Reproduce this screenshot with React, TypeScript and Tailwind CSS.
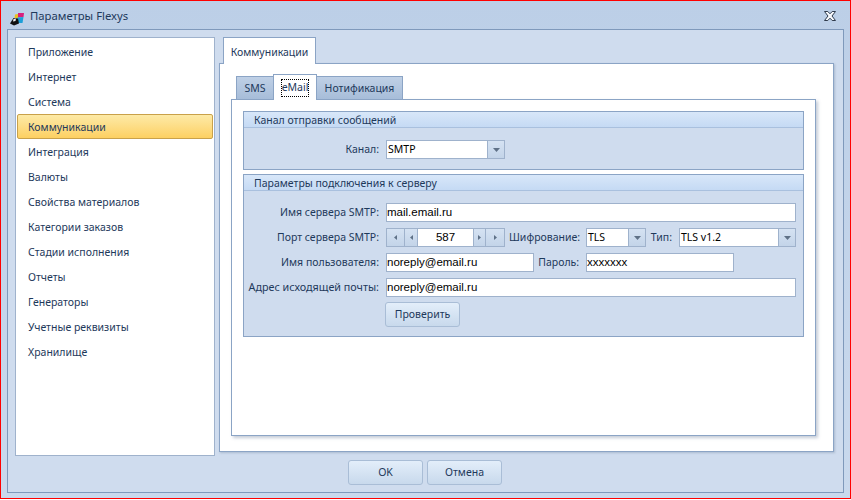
const font = 'font-["Noto_Sans",sans-serif]';
const fieldFont = 'font-["Liberation_Sans",sans-serif] text-[11.5px] text-black leading-none';

const menuItems = [
  'Приложение',
  'Интернет',
  'Система',
  'Коммуникации',
  'Интеграция',
  'Валюты',
  'Свойства материалов',
  'Категории заказов',
  'Стадии исполнения',
  'Отчеты',
  'Генераторы',
  'Учетные реквизиты',
  'Хранилище',
];

function Arrow({ dir }: { dir: 'left' | 'right' | 'down' }) {
  const points = dir === 'down' ? '0,0 7,0 3.5,4' : dir === 'left' ? '3,0 3,5 0,2.5' : '0,0 0,5 3,2.5';
  return (
    <svg width={dir === 'down' ? 7 : 3} height={dir === 'down' ? 4 : 5} className="shrink-0">
      <polygon points={points} fill="#5f7187" />
    </svg>
  );
}

function Logo() {
  return (
    <svg width="15" height="13" viewBox="0 0 15 13" className="shrink-0 mt-[8px]">
      <polygon points="5,1.5 8,1 8,5 4.5,5" fill="#e8c020" />
      <polygon points="8,0 14,0 13.5,4 8,4.5" fill="#d81f7c" />
      <polygon points="7.5,4.5 13.5,4 12.5,10 8,10" fill="#1c9fd8" />
      <polygon points="0,10.5 3.5,5 8,5.5 9,10.5 4,12.5" fill="#111" />
      <polygon points="3.5,6 6,5.5 5.5,8 3,8.5" fill="#f2f2f2" />
    </svg>
  );
}

function CloseIcon() {
  return (
    <svg width="12" height="10" viewBox="0 0 12 10">
      <path d="M.5 .5 H3.8 L6 2.8 L8.2 .5 H11.5 L8 5 L11.5 9.5 H8.2 L6 7.2 L3.8 9.5 H.5 L4 5 Z" fill="#f7f9fc" stroke="#2f3b4c" strokeWidth="1" />
    </svg>
  );
}

function Field({ width, value }: { width: string; value: string }) {
  return (
    <div className={`${width} h-[19px] shrink-0 bg-white border border-[#9fb2cc] flex items-center ${fieldFont}`}>
      {value}
    </div>
  );
}

function Combo({ width, value }: { width: string; value: string }) {
  return (
    <div className={`${width} h-[19px] shrink-0 bg-white border border-[#9fb2cc] flex items-center text-[10.5px] text-black leading-none`}>
      <span className="flex-1 pl-[1px]">{value}</span>
      <span className="w-[17px] h-full bg-gradient-to-b from-[#d5e2f2] to-[#c3d4e9] border-l border-[#9fb2cc] flex items-center justify-center">
        <Arrow dir="down" />
      </span>
    </div>
  );
}

function Spinner() {
  const btn = 'h-full bg-gradient-to-b from-[#d5e2f2] to-[#c3d4e9] border-[#9fb2cc] flex items-center justify-center';
  return (
    <div className={`w-[119px] h-[19px] shrink-0 bg-white border border-[#9fb2cc] flex items-center ${fieldFont}`}>
      <span className={`w-[18px] border-r ${btn}`}>
        <Arrow dir="left" />
      </span>
      <span className={`w-[13px] border-r ${btn}`}>
        <Arrow dir="left" />
      </span>
      <span className="flex-1 text-center">587</span>
      <span className={`w-[13px] border-x ${btn}`}>
        <Arrow dir="right" />
      </span>
      <span className={`w-[18px] ${btn}`}>
        <Arrow dir="right" />
      </span>
    </div>
  );
}

function Group({ title, className, children }: { title: string; className: string; children: React.ReactNode }) {
  return (
    <div className={`border border-[#8ba4c5] bg-[#cfdcee] ${className}`}>
      <div className="h-[16px] pl-[10px] pt-[1px] flex items-center bg-gradient-to-b from-[#d8e7f9] to-[#c5daf4] border-b border-[#a9c0de] text-[10.5px] text-[#1e395b] leading-none">
        {title}
      </div>
      {children}
    </div>
  );
}

function Label({ children, className = '' }: { children: React.ReactNode; className?: string }) {
  return <span className={`text-[#1e395b] leading-none text-right shrink-0 ${className}`}>{children}</span>;
}

function Row({ label, labelSize = 'text-[10.5px]', children }: { label: string; labelSize?: string; children: React.ReactNode }) {
  return (
    <div className="flex items-center">
      <Label className={`w-[135px] ${labelSize}`}>{label}</Label>
      <div className="ml-[7px] flex items-center">{children}</div>
    </div>
  );
}

function FlatButton({ children }: { children: React.ReactNode }) {
  return (
    <div className="w-[75px] h-[25px] rounded-[3px] border border-[#a9bdd6] bg-gradient-to-b from-[#e3eefa] to-[#c8d9ec] flex items-center justify-center text-[10.5px] text-[#1e395b] leading-none">
      {children}
    </div>
  );
}

export default function App() {
  return (
    <div className={`w-[851px] h-[499px] border border-[#ff0000] bg-gradient-to-b from-[#bccfe7] to-[#c9d9ed] flex flex-col ${font}`}>
      {/* Title bar */}
      <div className="h-[28px] shrink-0 pl-[9px] pr-[14px] flex items-center">
        <Logo />
        <span className="ml-[5px] mt-[2px] text-[11.3px] text-[#1e395b] leading-none">Параметры Flexys</span>
        <span className="ml-auto flex mt-[1px]">
          <CloseIcon />
        </span>
      </div>

      {/* Window body */}
      <div className="mx-[6px] h-[464px] border border-[#7f99bb] bg-[#cfdcee] pt-[7px] pl-[7px] pr-[8px] flex flex-col">
        <div className="flex h-[419px]">
          <div className="w-[200px] shrink-0 bg-white border border-[#9fb2cc] p-[1px]">
            {menuItems.map((item) =>
              item === 'Коммуникации' ? (
                <div key={item} className="h-[25px] pl-[10px] pt-[1px] flex items-center rounded-[2px] border border-[#c9a14a] bg-gradient-to-b from-[#fdeaa6] to-[#fdd061] text-[10.5px] text-[#1e395b] leading-none">
                  {item}
                </div>
              ) : (
                <div key={item} className="h-[25px] pl-[11px] pt-[2px] flex items-center text-[10.5px] text-[#1e395b] leading-none">
                  {item}
                </div>
              ),
            )}
          </div>

          <div className="ml-[4px] w-[615px] flex flex-col">
            <div className="h-[26px] pl-[4px] flex shrink-0">
              <div className="relative z-10 w-[93px] h-[27px] pt-[2px] bg-white border border-b-0 border-[#8ba4c5] flex items-center justify-center text-[10.5px] text-[#1e395b] leading-none">
                Коммуникации
              </div>
            </div>
            <div className="h-[389px] shrink-0 bg-white border border-[#8ba4c5] shadow-[1px_1px_2px_rgba(90,110,140,0.3)] pt-[10px] pl-[11px]">
              <div className="h-[25px] pl-[5px] flex items-end">
                <div className="w-[38px] h-[23px] bg-gradient-to-b from-[#bfd0e6] to-[#a7bdd9] border border-b-0 border-[#8ba4c5] flex items-center justify-center text-[10.5px] text-[#1e395b] leading-none">
                  SMS
                </div>
                <div className="relative z-10 w-[44px] h-[26px] -mb-px -ml-px bg-white border border-b-0 border-[#8ba4c5] flex items-center justify-center text-[10.5px] text-[#1e395b] leading-none">
                  <span className="w-[28px] h-[18px] border border-dotted border-black flex items-center justify-center leading-none">eMail</span>
                </div>
                <div className="w-[87px] h-[23px] -ml-px bg-gradient-to-b from-[#bfd0e6] to-[#a7bdd9] border border-b-0 border-[#8ba4c5] flex items-center justify-center text-[10.5px] text-[#1e395b] leading-none">
                  Нотификация
                </div>
              </div>

              <div className="w-[585px] h-[337px] bg-white border border-[#8ba4c5] shadow-[2px_2px_3px_rgba(90,110,140,0.35)] pt-[11px] pl-[11px]">
                <Group title="Канал отправки сообщений" className="w-[561px] h-[59px]">
                  <div className="mt-[12px] flex items-center">
                    <Label className="w-[135px] text-[10.5px]">Канал:</Label>
                    <div className="ml-[7px]">
                      <Combo width="w-[119px]" value="SMTP" />
                    </div>
                  </div>
                </Group>

                <Group title="Параметры подключения к серверу" className="mt-[4px] w-[561px] h-[163px]">
                  <div className="pt-[12px] flex flex-col gap-[6px]">
                    <Row label="Имя сервера SMTP:">
                      <Field width="w-[410px]" value="mail.email.ru" />
                    </Row>
                    <Row label="Порт сервера SMTP:">
                      <Spinner />
                      <Label className="ml-[4px] w-[71px] text-[10.5px]">Шифрование:</Label>
                      <div className="ml-[6px]">
                        <Combo width="w-[60px]" value="TLS" />
                      </div>
                      <Label className="ml-[4px] w-[22px] text-[10.5px]">Тип:</Label>
                      <div className="ml-[7px]">
                        <Combo width="w-[117px]" value="TLS v1.2" />
                      </div>
                    </Row>
                    <Row label="Имя пользователя:">
                      <Field width="w-[148px]" value="noreply@email.ru" />
                      <Label className="w-[45px] text-[10.5px]">Пароль:</Label>
                      <div className="ml-[7px]">
                        <Field width="w-[148px]" value="xxxxxxx" />
                      </div>
                    </Row>
                    <Row label="Адрес исходящей почты:" labelSize="text-[10.75px]">
                      <Field width="w-[410px]" value="noreply@email.ru" />
                    </Row>
                    <div className="pl-[141px] -mt-[1px]">
                      <FlatButton>Проверить</FlatButton>
                    </div>
                  </div>
                </Group>
              </div>
            </div>
          </div>
        </div>

        {/* Footer buttons */}
        <div className="mt-[4px] pl-[333px] flex gap-[4px]">
          <FlatButton>OK</FlatButton>
          <FlatButton>Отмена</FlatButton>
        </div>
      </div>
    </div>
  );
}
